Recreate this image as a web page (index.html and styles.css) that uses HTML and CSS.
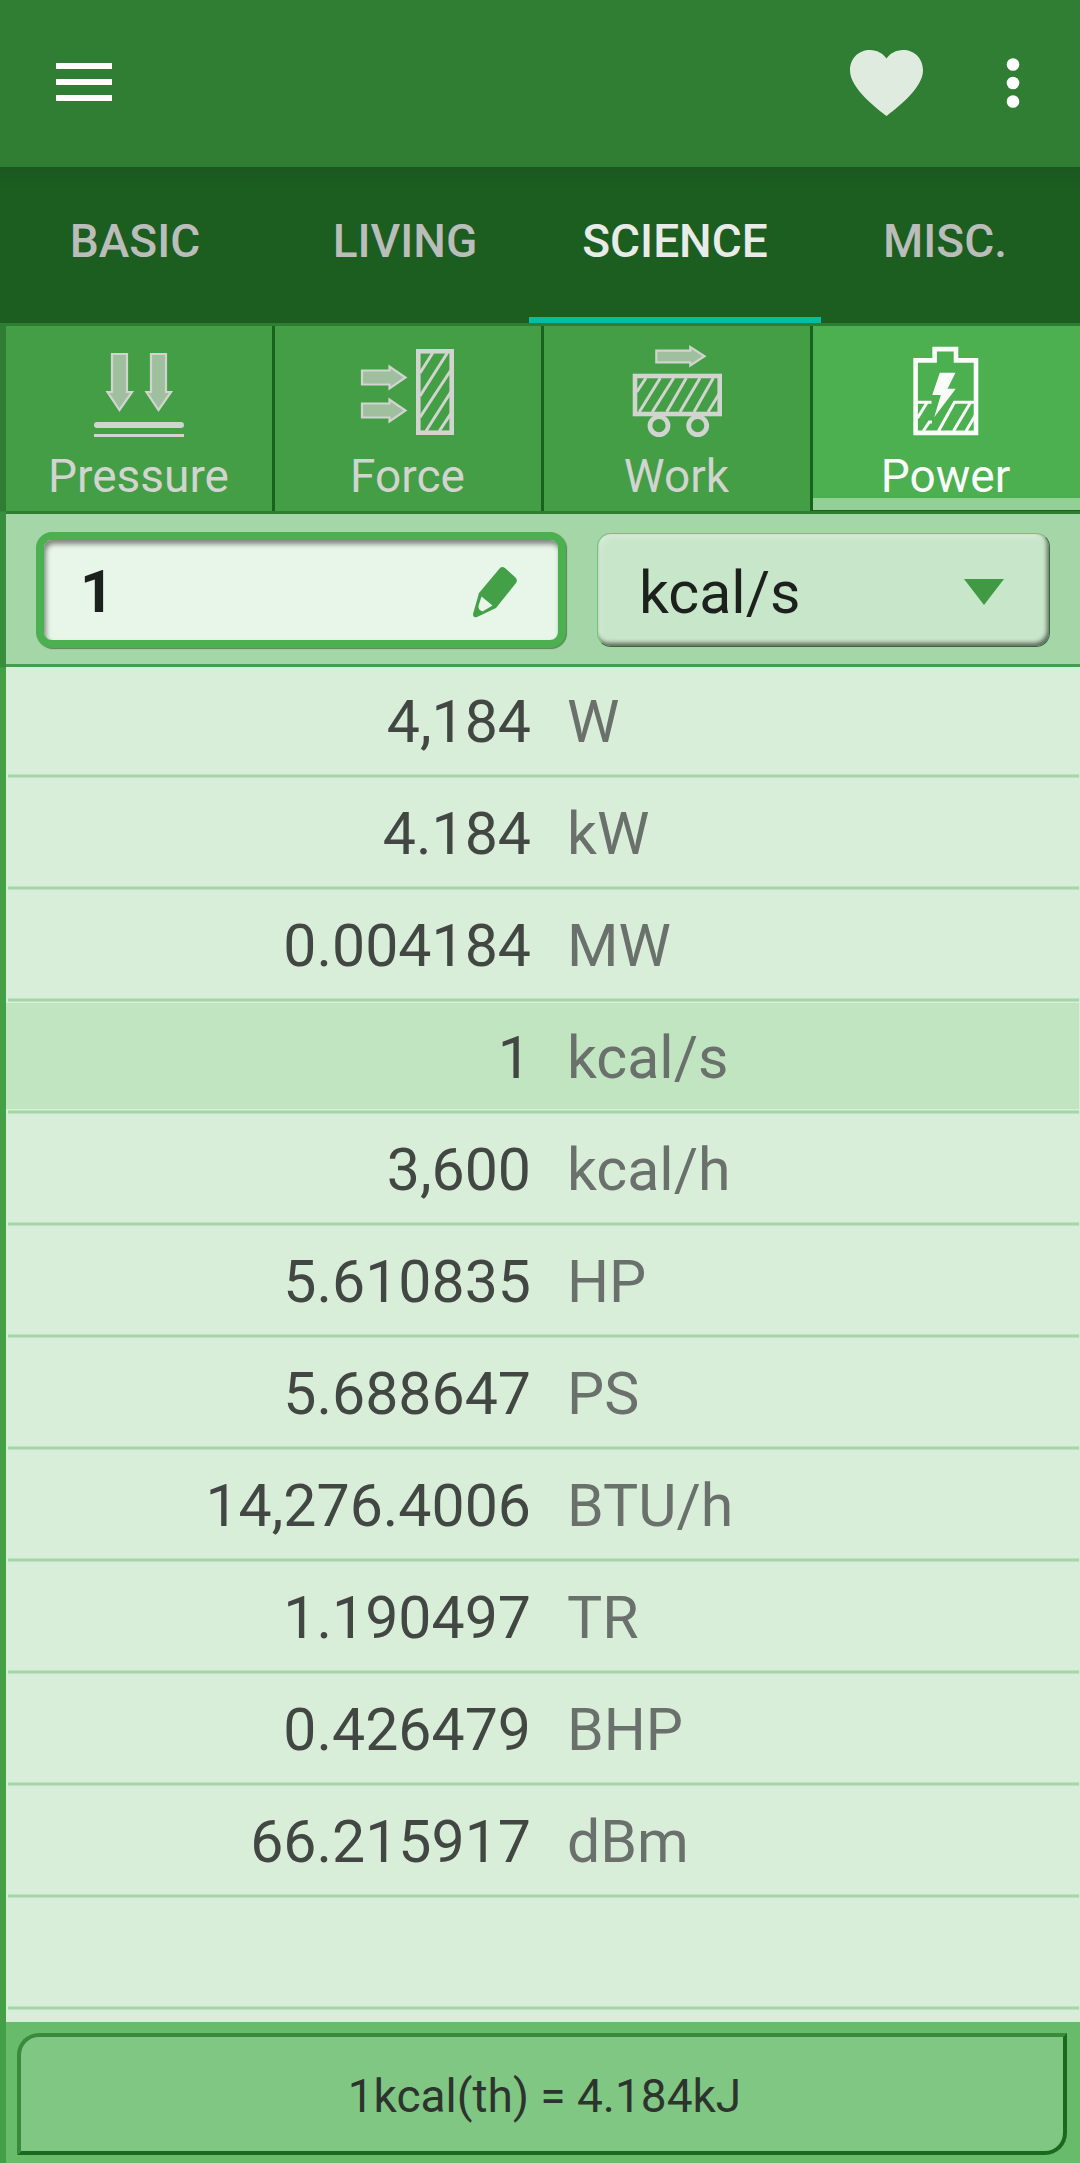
FILE: index.html
```
<!DOCTYPE html>
<html lang="en">
<head>
  <meta charset="UTF-8" />
  <meta name="viewport" content="width=device-width, initial-scale=1.0" />
  <title>Unit Converter</title>
  <link rel="stylesheet" href="styles.css">
</head>
<body>
  <!-- App bar -->
  <header class="app-bar">
    <button class="icon-btn menu-btn" aria-label="Menu">
      <svg width="56" height="38" viewBox="0 0 56 38"><path d="M0 0h56v6H0zM0 16h56v6H0zM0 32h56v6H0z" fill="#fff"/></svg>
    </button>
    <button class="icon-btn heart-btn" aria-label="Favorites">
      <svg width="73" height="66" viewBox="0 0 73 66"><path d="M36.5 66C29 60 0 39 0 20.500C0 8 9 0 20 0C27 0 33 3.500 36.500 8.500C40 3.500 46 0 53 0C64 0 73 8 73 20.500C73 39 44 60 36.500 66Z" fill="#e0ebe0"/></svg>
    </button>
    <button class="icon-btn more-btn" aria-label="More">
      <svg width="14" height="50" viewBox="0 0 14 50"><g fill="#fff"><circle cx="7" cy="6.500" r="6.300"/><circle cx="7" cy="25" r="6.300"/><circle cx="7" cy="43.500" r="6.300"/></g></svg>
    </button>
  </header>

  <!-- Category tabs -->
  <nav class="tabs">
    <a class="tab" href="#">BASIC</a>
    <a class="tab" href="#">LIVING</a>
    <a class="tab active" href="#">SCIENCE</a>
    <a class="tab" href="#">MISC.</a>
  </nav>

  <main class="converter">
    <!-- Quantity types -->
    <div class="types">
      <a class="type" href="#">
        <svg class="type-icon" viewBox="0 0 96 96">
          <g class="arrow">
            <path d="M21 12H36V50H41L28.500 68L16.500 50H21Z"/>
            <path d="M60 12H75V50H80L67.500 68L55.500 50H60Z"/>
          </g>
          <rect class="solid" x="3" y="80" width="90" height="6" rx="3"/>
          <rect class="solid" x="3" y="92" width="90" height="3"/>
        </svg>
        <span>Pressure</span>
      </a>
      <a class="type" href="#">
        <svg class="type-icon" viewBox="0 0 96 96">
          <g class="arrow">
            <path d="M2 28.500H29.500V24.500L45.500 35.500L29.500 46.500V42.500H2Z"/>
            <path d="M2 61.500H29.500V57.500L45.500 68.500L29.500 79.500V75.500H2Z"/>
          </g>
          <rect class="frame" x="58.300" y="9.300" width="33.400" height="81.400"/>
          <path class="hatch" d="M72.700 11L60 31M87.300 11L60 54M91 28L60 75.300M91 49.700L66 89M91 71.300L79.300 89"/>
        </svg>
        <span>Force</span>
      </a>
      <a class="type" href="#">
        <svg class="type-icon" viewBox="0 0 96 96">
          <g class="arrow">
            <path d="M27.300 8.700H61.300V5L75.500 14.200L61.300 23.500V20.300H27.300Z"/>
          </g>
          <rect class="frame" x="6" y="34" width="84.700" height="38"/>
          <path class="hatch" d="M17 36L7.700 50M31.300 36L10.300 70M44.700 36L23.300 70M57.300 36L37.700 70M71 36L51 70M84.300 36L65 70M90 52L79 70"/>
          <circle class="wheel" cx="30" cy="83.700" r="9"/>
          <circle class="wheel" cx="68.700" cy="83.700" r="9"/>
        </svg>
        <span>Work</span>
      </a>
      <a class="type active" href="#">
        <svg class="type-icon" viewBox="0 0 96 96">
          <path class="frame" d="M17.600 18.400H36.600V7.100H58V18.400H78V90.900H17.600Z"/>
          <path class="hatch" d="M17 60.300H33.500M78 60.300H56.500L40.500 89M28.800 61L19.500 76M72.200 61L55.500 89M77.500 73L68 89M34 80H31.300L25.300 89"/>
          <path class="solid" d="M41.800 30.700H57.500L49.500 46.700H57.800L36.200 75.300L42.800 53H34.200Z"/>
        </svg>
        <span>Power</span>
      </a>
    </div>

    <!-- Value and unit to convert from -->
    <div class="controls">
      <div class="value-field">
        <span>1</span>
        <svg width="46" height="52" viewBox="0 0 46 52">
          <path d="M28 2Q30 0 33 2L43 11Q46 14 44 17L24 42L5 51Q1 52 1 48L7 27Z" fill="#43a047"/>
          <path d="M9.500 30.500L20.500 39.500L10.500 45.500Q6 44 6.500 40Z" fill="#e8f5e9"/>
        </svg>
      </div>
      <div class="unit-select">
        <span>kcal/s</span>
        <svg width="40" height="26" viewBox="0 0 40 26"><path d="M0 0H40L20 26Z" fill="#3f9a43"/></svg>
      </div>
    </div>

    <!-- Conversion results -->
    <ul class="results">
      <li class="row"><span class="value">4,184</span><span class="unit">W</span></li>
      <li class="row"><span class="value">4.184</span><span class="unit">kW</span></li>
      <li class="row"><span class="value">0.004184</span><span class="unit">MW</span></li>
      <li class="row selected"><span class="value">1</span><span class="unit">kcal/s</span></li>
      <li class="row"><span class="value">3,600</span><span class="unit">kcal/h</span></li>
      <li class="row"><span class="value">5.610835</span><span class="unit">HP</span></li>
      <li class="row"><span class="value">5.688647</span><span class="unit">PS</span></li>
      <li class="row"><span class="value">14,276.4006</span><span class="unit">BTU/h</span></li>
      <li class="row"><span class="value">1.190497</span><span class="unit">TR</span></li>
      <li class="row"><span class="value">0.426479</span><span class="unit">BHP</span></li>
      <li class="row"><span class="value">66.215917</span><span class="unit">dBm</span></li>
      <li class="row"></li>
    </ul>

    <footer class="note">
      <div class="note-box">1kcal(th) = 4.184kJ</div>
    </footer>
  </main>
</body>
</html>
```
FILE: styles.css
```
/* Reset and base styles */
* {
  margin: 0;
  padding: 0;
  box-sizing: border-box;
}

body {
  width: 1080px;
  height: 2163px;
  display: flex;
  flex-direction: column;
  overflow: hidden;
  background-color: #2e7d32;
  font-family: Roboto, sans-serif;
}

a {
  color: inherit;
  text-decoration: none;
}

svg {
  display: block;
}

/* App bar */
.app-bar {
  height: 167px;
  padding: 0 60px 0 56px;
  display: flex;
  align-items: center;
  background-color: #2f7e33;
}

.icon-btn {
  border: none;
  background: none;
}

.menu-btn {
  margin-right: auto;
  padding-bottom: 3px;
}

.heart-btn {
  margin-right: 83px;
  padding-bottom: 1px;
}

.more-btn {
  padding-bottom: 1px;
}

/* Category tabs */
.tabs {
  height: 156px;
  display: flex;
  background: linear-gradient(#1b5820, #1b5e1f 24px);
}

.tab {
  position: relative;
  flex: 1;
  text-align: center;
  font-size: 46px;
  font-weight: 500;
  line-height: 149px;
  color: #babdba;
}

.tab.active {
  color: #e8ebe8;
}

.tab.active::after {
  content: "";
  position: absolute;
  left: -11px;
  right: -11px;
  bottom: 0;
  height: 6px;
  background-color: #06bda0;
}

/* Converter body, with the coloured edge on the left */
.converter {
  flex: 1;
  padding-left: 6px;
  display: flex;
  flex-direction: column;
  background: linear-gradient(#2e7d32, #2e7d32 188px, #388e3c 189px, #388e3c 344px, #43a047 345px);
}

/* Quantity types */
.types {
  height: 191px;
  display: grid;
  grid-template-columns: 269px 269px 269px 1fr;
  border-top: 3px solid #2e7d32;
  border-bottom: 3px solid #2e7d32;
}

.type {
  padding-top: 16px;
  display: flex;
  flex-direction: column;
  align-items: center;
  border-right: 3px solid #17631b;
  background-color: #439e45;
  color: #d1d4cf;
  font-size: 46px;
  line-height: 54px;
}

.type span {
  margin-top: 11px;
  padding-right: 1px;
}

.type.active {
  padding-right: 1px;
  border-right: none;
  background: linear-gradient(#4caf50 172px, #93d095 172px, #93d095 184px, #17631b 184px);
  color: #fafcfa;
}

.type-icon {
  width: 96px;
  height: 96px;
  fill: none;
  stroke: currentColor;
  stroke-width: 2.2;
}

.type-icon .arrow {
  fill: #9fbf9f;
}

.type-icon .solid {
  fill: currentColor;
  stroke: none;
}

.type-icon .frame {
  stroke-width: 4.6;
}

.type-icon .hatch {
  stroke-width: 3;
}

.type-icon .wheel {
  stroke-width: 4.8;
}

/* Value and unit */
.controls {
  height: 153px;
  padding: 18px 30px 0;
  display: flex;
  align-items: flex-start;
  gap: 31px;
  border-bottom: 3px solid #439e4b;
  background-color: #a5d6a7;
  color: #1d211d;
  font-size: 59px;
}

.value-field {
  width: 530px;
  height: 116px;
  padding: 3px 40px 0 36px;
  display: flex;
  align-items: center;
  justify-content: space-between;
  border: 8px solid #4caf50;
  border-radius: 16px;
  background-color: #e8f5e9;
  box-shadow: 1px 1px 1px #5d815e, inset 2px 4px 5px rgba(0, 0, 0, 0.45);
  font-weight: 700;
}

.unit-select {
  width: 453px;
  height: 114px;
  margin-top: 1px;
  padding: 4px 45px 0 41px;
  display: flex;
  align-items: center;
  justify-content: space-between;
  border: 1px solid;
  border-color: #72c477 #3a683c #3a683c #72c477;
  border-radius: 14px;
  background-color: #c8e6c9;
  box-shadow: inset -2px -3px 4px rgba(0, 0, 0, 0.55), inset 2px 3px 6px rgba(255, 255, 255, 0.3);
}

/* Conversion results */
.results {
  height: 1355px;
  list-style: none;
  background-color: #d9eed9;
}

.row {
  height: 112px;
  padding: 0 1px 0 2px;
  display: grid;
  grid-template-columns: 523px 1fr;
  column-gap: 36px;
  font-size: 59px;
  line-height: 112px;
  background: linear-gradient(#bfe3c0 1px, #a5d6a7 1px, #a5d6a7 3px, #bfe3c0 3px) no-repeat 2px 108px / 1071px 4px;
}

.row:first-child {
  height: 111px;
  line-height: 110px;
  background-position-y: 107px;
}

.row.selected {
  background:
    linear-gradient(#bfe3c0 1px, #a5d6a7 1px, #a5d6a7 3px, #bfe3c0 3px) no-repeat 2px 108px / 1071px 4px,
    linear-gradient(#c1e5c1, #c1e5c1) no-repeat 0 1px / 1073px 106px;
}

.value {
  text-align: right;
  color: #434743;
}

.unit {
  color: #6a706b;
}

/* Footer note */
.note {
  height: 141px;
  padding: 11px 13px 8px 11px;
  background-color: #67bb6a;
}

.note-box {
  height: 122px;
  padding-left: 5px;
  border: 4px solid;
  border-color: #388a3c #1c681f #1c681f #388a3c;
  border-radius: 22px 0 22px 0;
  background-color: #81c784;
  color: #2d342e;
  font-size: 46px;
  line-height: 118px;
  text-align: center;
}
```
